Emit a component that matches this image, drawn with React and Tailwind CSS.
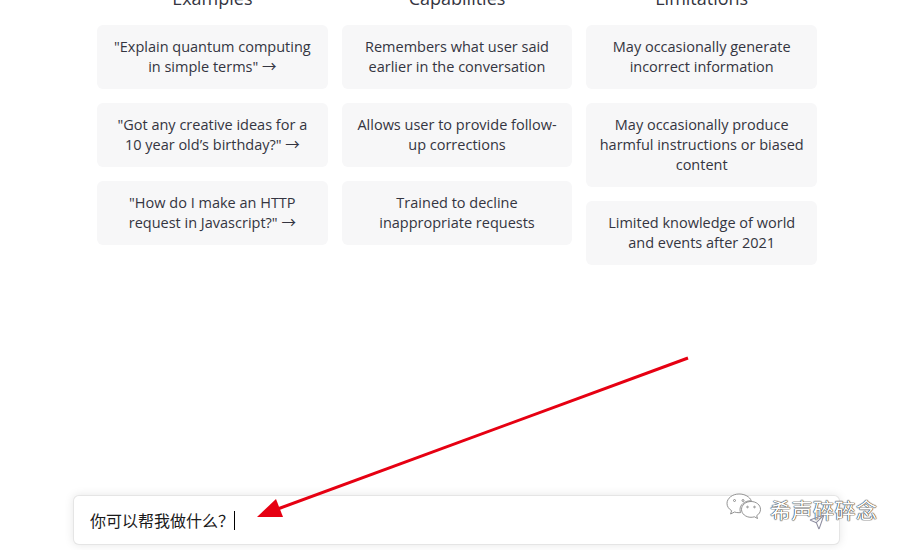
import { Send } from "lucide-react";

const COLUMNS = [
  {
    title: "Examples",
    items: [
      "\"Explain quantum computing in simple terms\" →",
      "\"Got any creative ideas for a 10 year old’s birthday?\" →",
      "\"How do I make an HTTP request in Javascript?\" →",
    ],
  },
  {
    title: "Capabilities",
    items: [
      "Remembers what user said earlier in the conversation",
      "Allows user to provide follow-up corrections",
      "Trained to decline inappropriate requests",
    ],
  },
  {
    title: "Limitations",
    items: [
      "May occasionally generate incorrect information",
      "May occasionally produce harmful instructions or biased content",
      "Limited knowledge of world and events after 2021",
    ],
  },
];

function WechatMark() {
  return (
    <svg width="36" height="32" viewBox="0 0 36 32" fill="none" stroke="#777" strokeWidth="0.8">
      <path d="M13 1C6.500 1 1 5.200 1 10.400c0 3 1.800 5.600 4.600 7.300L4.600 21l3.900-2c1.400.5 3 .7 4.500.7.6 0 1.100 0 1.600-.1-.4-1-.6-2-.6-3 0-4.900 4.700-8.800 10.500-8.800h.8C23.700 3.700 18.800 1 13 1z" fill="#fff" />
      <path d="M25 8.500c-5.300 0-9.500 3.500-9.500 7.900s4.200 7.900 9.500 7.900c1.200 0 2.400-.2 3.400-.5l3.100 1.700-.8-2.800c2.300-1.500 3.800-3.700 3.800-6.300 0-4.400-4.200-7.900-9.500-7.900z" fill="#fff" />
      <circle cx="8.500" cy="7.500" r="1" />
      <circle cx="17" cy="7.500" r="1" />
      <circle cx="21.500" cy="14" r="0.800" />
      <circle cx="28.500" cy="14" r="0.800" />
    </svg>
  );
}

export default function App() {
  return (
    <div className="relative h-[550px] w-[907px] overflow-hidden bg-white font-['Open_Sans','Noto_Sans_CJK_SC',sans-serif] text-[#343541]">
      <div className="ml-[97px] -mt-[14px] flex w-[720px] gap-[14px]">
        {COLUMNS.map((col) => (
          <div key={col.title} className="flex flex-1 flex-col gap-[14px]">
            <h2 className="h-[25px] text-center text-lg leading-[24px] font-normal">{col.title}</h2>
            {col.items.map((item) => (
              <div key={item} className="rounded-md bg-[#f7f7f8] p-3 text-center text-[14.5px] leading-5">
                {item}
              </div>
            ))}
          </div>
        ))}
      </div>

      {/* prompt box */}
      <div className="absolute top-[495px] left-[73px] flex h-[50px] w-[767px] items-center rounded-md border border-black/10 bg-white pr-[14px] pl-4 shadow-[0_0_10px_rgba(0,0,0,0.10)]">
        <span className="font-['Noto_Sans_CJK_SC',sans-serif] text-base text-[#1a1a1a]">你可以帮我做什么？</span>
        <span className="h-[19px] w-px bg-black" />
        <Send size={16} strokeWidth={1.6} className="relative z-10 mt-[3px] ml-auto text-[#8e8ea0]" />
      </div>

      {/* annotation arrow */}
      <svg className="absolute top-0 left-0" width="907" height="550" fill="none">
        <line x1="688" y1="358" x2="275" y2="510" stroke="#e60012" strokeWidth="3" />
        <path d="M257 517 L276 499 L283 517 Z" fill="#e60012" />
      </svg>

      {/* watermark */}
      <div className="absolute top-[493px] left-[726px] flex items-center gap-2">
        <WechatMark />
        <span className="font-['Noto_Sans_CJK_SC',sans-serif] text-[21px] leading-none tracking-[0.5px] text-white [text-shadow:0_0_1px_#333,0_0_1px_#333,0_0_1px_#333]">希声碎碎念</span>
      </div>
    </div>
  );
}
